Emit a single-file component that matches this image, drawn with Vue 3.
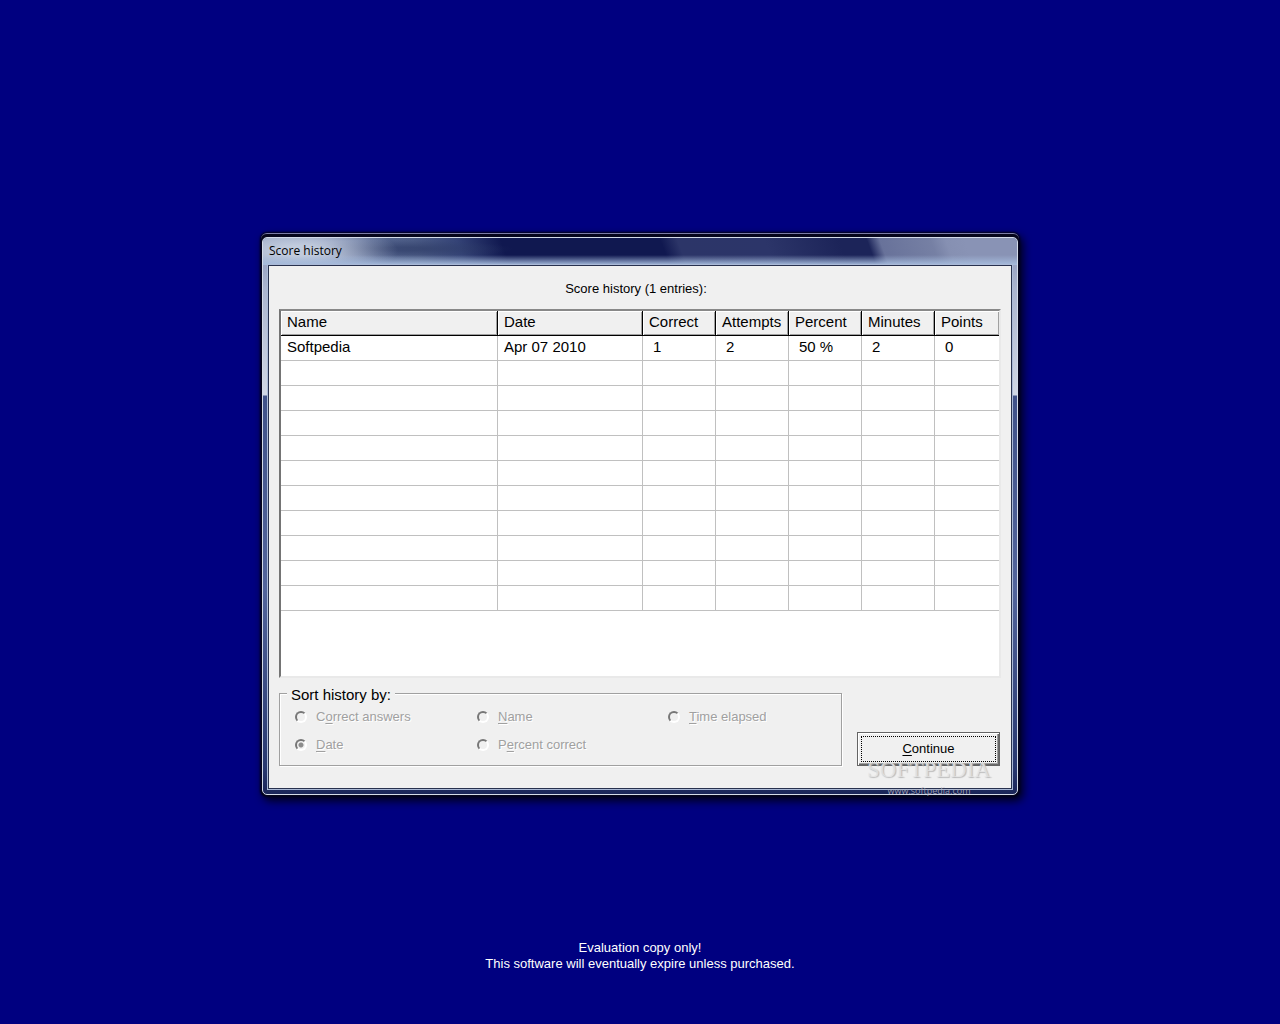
<script setup>
import { ref } from 'vue'

const columns = ['Name', 'Date', 'Correct', 'Attempts', 'Percent', 'Minutes', 'Points']
const widths = [217, 145, 73, 73, 73, 73, 64]
const entries = [['Softpedia', 'Apr 07 2010', '1', '2', '50 %', '2', '0']]
const blankRows = 10

const sortOptions = [
  { id: 'correct', before: 'C', key: 'o', after: 'rrect answers' },
  { id: 'name', before: '', key: 'N', after: 'ame' },
  { id: 'time', before: '', key: 'T', after: 'ime elapsed' },
  { id: 'date', before: '', key: 'D', after: 'ate' },
  { id: 'percent', before: 'P', key: 'e', after: 'rcent correct' },
]
const sortBy = ref('date')
</script>

<template>
  <div class="desktop">
    <section class="window" aria-labelledby="window-title">
      <div class="frame">
        <header class="titlebar"><h1 id="window-title">Score history</h1></header>
        <div class="client">
          <p class="caption">Score history (1 entries):</p>

          <div class="list">
            <table>
              <colgroup>
                <col v-for="(w, i) in widths" :key="i" :style="{ width: (w / 718) * 100 + '%' }" />
              </colgroup>
              <thead>
                <tr>
                  <th v-for="c in columns" :key="c" scope="col">{{ c }}</th>
                </tr>
              </thead>
              <tbody>
                <tr v-for="(row, r) in entries" :key="r">
                  <td v-for="(cell, i) in row" :key="i" :class="{ number: i > 1 }">{{ cell }}</td>
                </tr>
                <tr v-for="n in blankRows" :key="'blank' + n">
                  <td v-for="c in columns" :key="c"></td>
                </tr>
              </tbody>
            </table>
          </div>

          <div class="bottom">
            <fieldset class="sort">
              <legend>Sort history by:</legend>
              <div class="options">
                <label v-for="o in sortOptions" :key="o.id" class="option" :for="o.id">
                  <input :id="o.id" v-model="sortBy" type="radio" name="sort" :value="o.id" disabled />
                  <span>{{ o.before }}<u>{{ o.key }}</u>{{ o.after }}</span>
                </label>
              </div>
            </fieldset>
            <button type="button" class="continue"><span class="focus"><span><u>C</u>ontinue</span></span></button>
          </div>
        </div>
      </div>
      <div class="watermark" aria-hidden="true">
        <span class="brand">SOFTPEDIA</span>
        <span class="site">www.softpedia.com</span>
      </div>
    </section>

    <footer class="notice">
      Evaluation copy only!<br />This software will eventually expire unless purchased.
    </footer>
  </div>
</template>

<style>
body {
  margin: 0;
  background: #000080;
}
</style>

<style scoped>
.desktop {
  box-sizing: border-box;
  min-height: 100vh;
  padding-top: 4px;
  display: grid;
  grid-template-rows: 1fr auto 1fr;
  grid-template-columns: minmax(0, 1fr);
  justify-items: center;
  background: #000080;
  color: #000;
  font: 13px/16px "Liberation Sans", Arial, sans-serif;
}

.window {
  grid-row: 2;
  position: relative;
  box-sizing: border-box;
  width: min(758px, 100%);
  padding: 3px 1px 1px;
  border-top: 1px solid #7b7ba6;
  border-radius: 6px;
  background: #05051c;
  box-shadow: 0 0 2px 1px #00001c, 3px 4px 9px 1px #000018;
}

.frame {
  padding: 0 5px 5px;
  border: 1px solid #d3dae8;
  border-radius: 5px;
  overflow: hidden;
  background: linear-gradient(#8893b9 0, #aab4ce 50px, #d0d7e5 157px, #405289 158px, #53659c 350px, #283870 530px, #1a2558 100%);
}

.titlebar {
  box-sizing: border-box;
  height: 27px;
  margin: 0 -5px;
  padding: 0 6px;
  background:
    linear-gradient(transparent 17px, #a5bbdc 27px),
    radial-gradient(ellipse 100px 28px at 35px 13px, #c1cbdd 20%, #c1cbdd00),
    radial-gradient(ellipse 110px 9px at 140px 11px, #2c3a6599 20%, #2c3a6500),
    linear-gradient(70deg, #8f9cbd 0, #8290b5 60px, #55658f 110px, #4b5b85 150px, #354477 190px, #101850 232px, #101850 382px, #2c3568 398px, #2c3569 480px, #1c2459 550px, #1c2459 576px, #68729a 588px, #7680a4 636px, #8690b2 650px, #8993b5 668px);
}

h1 {
  margin: 0;
  font: 12px/26px "Open Sans", "Noto Sans", sans-serif;
}

.client {
  padding: 15px 10px 22px;
  border: 1px solid #28314e;
  outline: 1px solid #aab9d6;
  background: #f0f0f0;
}

.caption {
  margin: 0 8px 12px 0;
  text-align: center;
}

.list {
  min-height: 365px;
  border: 2px solid;
  border-color: #888 #e9e9e9 #e9e9e9 #747474;
  background: #fff;
}

table {
  width: 100%;
  table-layout: fixed;
  border-collapse: separate;
  border-spacing: 0;
  font-size: 15px;
}

th,
td {
  box-sizing: border-box;
  height: 25px;
  padding: 0 0 2px 6px;
  border-right: 1px solid #c0c0c0;
  border-bottom: 1px solid #c0c0c0;
  line-height: 22px;
  text-align: left;
  white-space: nowrap;
}

th {
  border-color: #000;
  background: #f0f0f0;
  box-shadow: inset 1px 1px #fff, inset -1px -1px #a0a0a0;
  font-weight: normal;
}

th:last-child,
td:last-child {
  border-right: 0;
}

.number {
  padding-left: 10px;
}

.bottom {
  margin-top: 7px;
  display: flex;
  align-items: flex-end;
  justify-content: space-between;
  gap: 15px;
}

.sort {
  flex: 1;
  min-width: 0;
  margin: 0;
  padding: 0 7px;
  border: 1px solid #a0a0a0;
  box-shadow: 1px 1px #fff, inset 1px 1px #fff;
}

legend {
  padding: 2px 4px 0;
  background: #f0f0f0;
  font-size: 15px;
  line-height: 16px;
}

.options {
  display: grid;
  grid-template-columns: 182px 191px 1fr;
  row-gap: 12px;
  padding: 6px 0 12px 8px;
}

.option {
  display: flex;
  align-items: center;
  gap: 9px;
  color: #a0a0a0;
  text-shadow: 1px 1px #fff;
}

input {
  appearance: none;
  box-sizing: border-box;
  flex: none;
  width: 12px;
  height: 12px;
  margin: 0;
  border: 2px solid;
  border-color: #777 #fff #fff #777;
  border-radius: 50%;
  background: #f0f0f0;
}

input:checked {
  background: radial-gradient(circle, #8c8c8c 2px, #f0f0f0 3px);
}

u {
  text-underline-offset: 2px;
}

.continue {
  box-sizing: border-box;
  width: 143px;
  height: 34px;
  margin-right: 1px;
  padding: 3px;
  border: 1px solid #646464;
  background: #f0f0f0;
  box-shadow: inset 1px 1px #fff, inset -1px -1px #696969, inset -2px -2px #a0a0a0;
  color: #000;
  font: inherit;
}

.focus {
  box-sizing: border-box;
  height: 100%;
  display: flex;
  align-items: center;
  justify-content: center;
  border: 1px dotted #000;
}

.watermark {
  position: absolute;
  right: 27px;
  bottom: -3px;
  width: 126px;
  display: flex;
  flex-direction: column;
  align-items: center;
  pointer-events: none;
  white-space: nowrap;
}

.brand {
  color: #e4e4e4cc;
  font: 23px/26px "Liberation Serif", serif;
  text-shadow: 1px 1px 1px #bbb;
}

.site {
  color: #b4b4bedd;
  font: 9px/16px "Open Sans", sans-serif;
}

.notice {
  grid-row: 3;
  align-self: end;
  padding-bottom: 52px;
  color: #fff;
  text-align: center;
}
</style>
